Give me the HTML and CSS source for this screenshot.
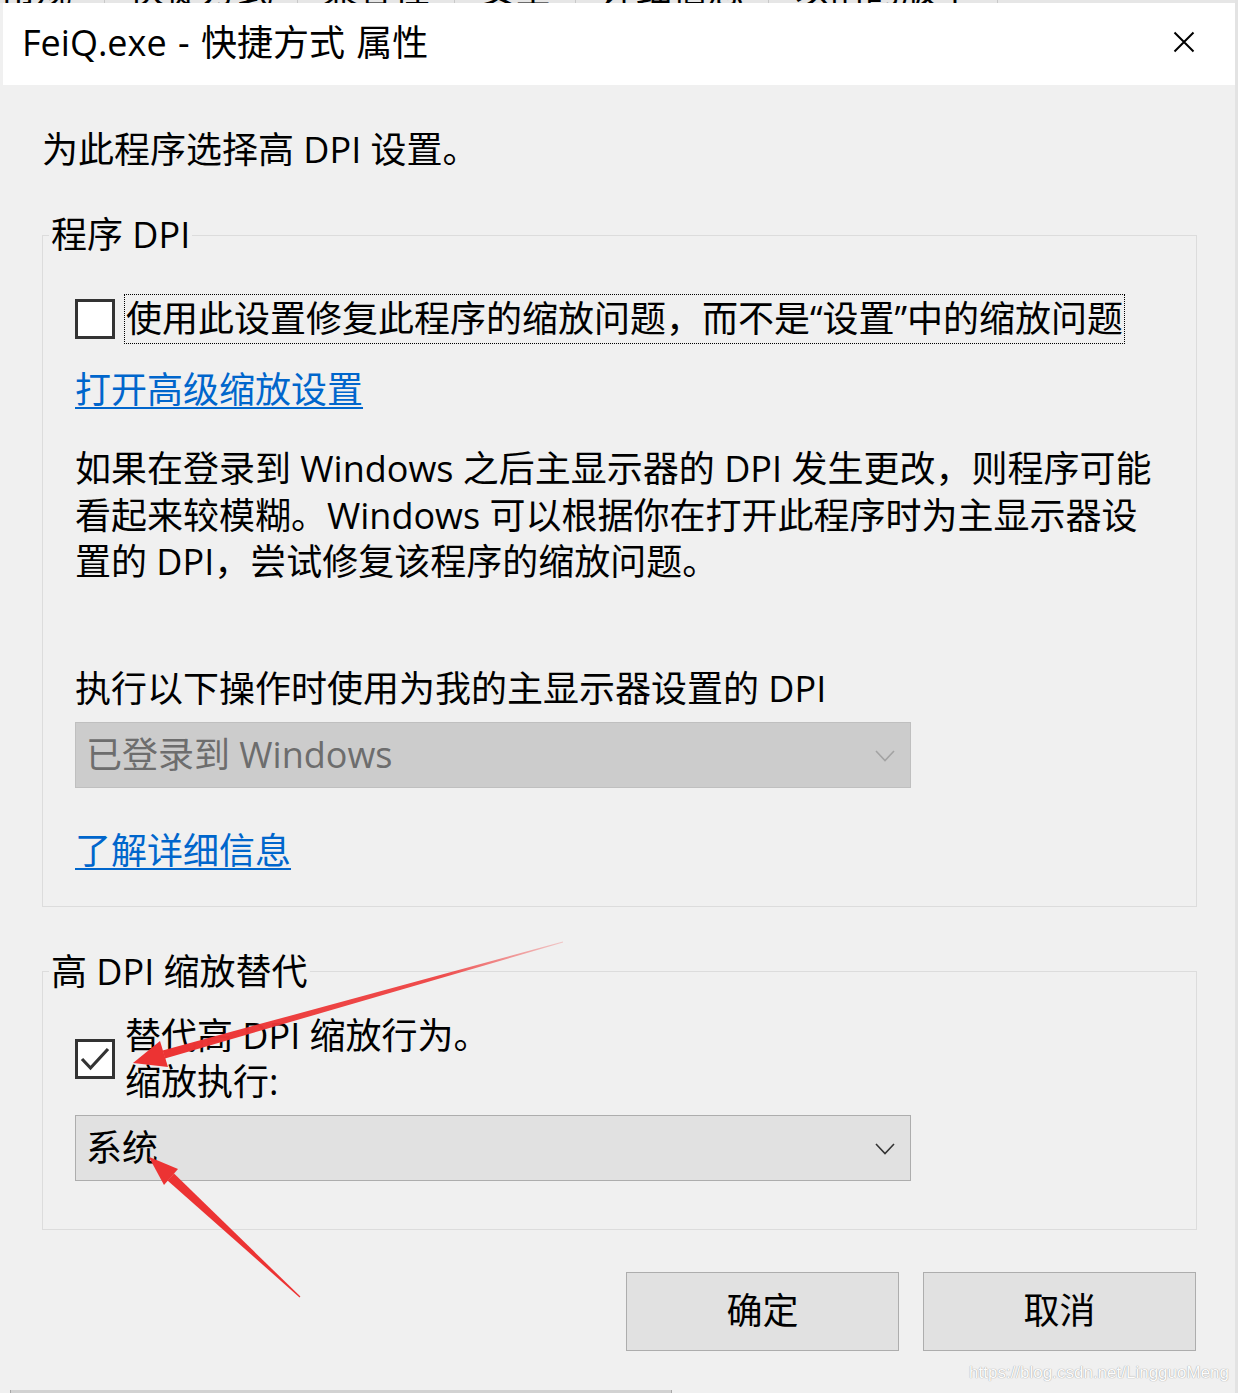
FILE: index.html
```html
<!DOCTYPE html>
<html lang="zh-CN">
<head>
<meta charset="utf-8">
<title>FeiQ.exe - 快捷方式 属性</title>
<link rel="stylesheet" href="styles.css">
</head>
<body>
<div class="screen">
  <div class="bgtabs">
    <span class="bgtab t1">常规</span>
    <span class="bgtab t2">快捷方式</span>
    <span class="bgtab t3">兼容性</span>
    <span class="bgtab t4">安全</span>
    <span class="bgtab t5">详细信息</span>
    <span class="bgtab t6">以前的版本</span>
  </div>
  <div class="titlebar">
    <span class="title">FeiQ.exe - 快捷方式 属性</span>
    <svg class="close" width="22" height="22" viewBox="0 0 22 22"><path d="M1.5 1.5 L20.5 20.5 M20.5 1.5 L1.5 20.5" stroke="#000" stroke-width="2" fill="none"/></svg>
  </div>
  <div class="content">
    <p class="intro">为此程序选择高 DPI 设置。</p>

    <fieldset class="group g1">
      <legend>程序 DPI</legend>
      <div class="check-row r1">
        <span class="checkbox"></span>
        <span class="check-label focused">使用此设置修复此程序的缩放问题，而不是“设置”中的缩放问题</span>
      </div>
      <a class="link l1" href="#">打开高级缩放设置</a>
      <p class="desc">如果在登录到 Windows 之后主显示器的 DPI 发生更改，则程序可能<br>看起来较模糊。Windows 可以根据你在打开此程序时为主显示器设<br>置的 DPI，尝试修复该程序的缩放问题。</p>
      <div class="field-label">执行以下操作时使用为我的主显示器设置的 DPI</div>
      <div class="select disabled">
        <span class="select-text">已登录到 Windows</span>
        <svg class="chevron" width="20" height="12" viewBox="0 0 20 12"><polyline points="1,1 10,10.5 19,1" fill="none" stroke="#a3a3a3" stroke-width="1.6"/></svg>
      </div>
      <a class="link l2" href="#">了解详细信息</a>
    </fieldset>

    <fieldset class="group g2">
      <legend>高 DPI 缩放替代</legend>
      <div class="check-row r2">
        <span class="checkbox checked">
          <svg width="34" height="34" viewBox="0 0 34 34"><polyline points="4,17 12.5,26 30,7" fill="none" stroke="#333" stroke-width="3.2"/></svg>
        </span>
        <span class="check-label two">替代高 DPI 缩放行为。<br>缩放执行:</span>
      </div>
      <div class="select enabled">
        <span class="select-text">系统</span>
        <svg class="chevron" width="20" height="12" viewBox="0 0 20 12"><polyline points="1,1 10,10.5 19,1" fill="none" stroke="#333" stroke-width="1.6"/></svg>
      </div>
    </fieldset>

    <div class="buttons">
      <button class="btn">确定</button>
      <button class="btn">取消</button>
    </div>
  </div>
  <div class="bottom-strip"></div>

  <svg class="annot" width="1238" height="1393" viewBox="0 0 1238 1393">
    <defs>
      <linearGradient id="fade1" x1="563" y1="942" x2="163" y2="1054" gradientUnits="userSpaceOnUse">
        <stop offset="0" stop-color="#f04a4a" stop-opacity="0.25"/>
        <stop offset="0.3" stop-color="#ee3b3b" stop-opacity="0.9"/>
        <stop offset="1" stop-color="#ec3333"/>
      </linearGradient>
    </defs>
    <polygon points="563.1,942.5 562.9,941.5 162.6,1050.5 165.0,1058.5" fill="url(#fade1)"/>
    <polygon points="133,1063 168,1067 160,1041" fill="#ec3333"/>
    <polygon points="300.4,1296.6 299.6,1297.4 167.5,1180.5 174,1173.5" fill="#ec3333"/>
    <polygon points="148.7,1156.7 178,1169 164,1185" fill="#ec3333"/>
  </svg>
  <div class="watermark">https://blog.csdn.net/LingguoMeng</div>
</div>
</body>
</html>
```

FILE: styles.css
```css
html, body {
  margin: 0;
  padding: 0;
}

body {
  background: #f0f0f0;
  font-family: "Open Sans", "Noto Sans CJK SC", sans-serif;
  font-size: 36px;
  color: #000;
}

.screen {
  position: relative;
  width: 1238px;
  height: 1393px;
  box-sizing: border-box;
  border-right: 3px solid #e3e3e3;
  background: #f0f0f0;
  overflow: hidden;
}

/* remnants of the window behind */
.bgtabs {
  height: 3px;
  overflow: hidden;
  display: flex;
  background: #e6e6e6;
  font-family: "Noto Sans CJK SC", sans-serif;
  font-size: 36px;
  line-height: 36px;
}

.bgtab {
  display: block;
  margin-top: -31px;
  height: 40px;
  padding: 0 24px;
  border-right: 1px solid #c8c8c8;
  white-space: nowrap;
}

.bgtab.t1 { padding-left: 0; width: 80px; }

.titlebar {
  margin-left: 3px;
  height: 82px;
  background: #fff;
  display: flex;
  align-items: center;
  justify-content: space-between;
  padding: 0 40px 0 19px;
}

.title {
  font-size: 36px;
  line-height: 46px;
  word-spacing: 2px;
  white-space: nowrap;
  margin-top: -2px;
}

.close {
  display: block;
  margin-top: -4px;
}

.content {
  padding: 42px 38px 0 42px;
}

.intro {
  margin: 0;
  line-height: 46px;
  white-space: nowrap;
}

.group {
  margin: 0;
  border: 1px solid #dcdcdc;
  padding: 0 0 0 32px;
  min-width: 0;
}

.group legend {
  margin-left: -26px;
  padding: 0 2px;
  line-height: 44px;
  white-space: nowrap;
}

.g1 {
  margin-top: 40px;
  padding-top: 37px;
  padding-bottom: 32px;
}

.g2 {
  margin-top: 43px;
  padding-top: 19px;
  padding-bottom: 48px;
}

.check-row {
  display: flex;
  align-items: center;
}

.checkbox {
  width: 40px;
  height: 40px;
  box-sizing: border-box;
  border: 3px solid #333;
  background: #fff;
  flex: none;
  display: flex;
  align-items: center;
  justify-content: center;
}

.checkbox svg {
  display: block;
}

.check-label {
  line-height: 46px;
  white-space: nowrap;
}

.r1 .check-label {
  margin-left: 9px;
}

.focused {
  border: 1px dotted #000;
  padding: 1px 1px;
}

.r2 .check-label {
  margin-left: 10px;
}

.link {
  display: block;
  width: max-content;
  color: #0066cc;
  text-decoration: underline;
  text-decoration-thickness: 2px;
  text-underline-offset: 4px;
  line-height: 46px;
  white-space: nowrap;
}

.l1 { margin-top: 23px; }
.l2 { margin-top: 40px; }

.desc {
  margin: 33px 0 0;
  line-height: 46.5px;
  white-space: nowrap;
}

.field-label {
  margin-top: 80px;
  line-height: 46px;
  white-space: nowrap;
}

.select {
  margin-top: 10px;
  width: 836px;
  height: 66px;
  box-sizing: border-box;
  display: flex;
  align-items: center;
  justify-content: space-between;
  padding: 0 15px 0 10px;
}

.select.disabled {
  background: #cccccc;
  border: 1px solid #bfbfbf;
  color: #6d6d6d;
}

.select.enabled {
  background: #e1e1e1;
  border: 1px solid #adadad;
  color: #000;
}

.select-text {
  line-height: 46px;
  white-space: nowrap;
}

.chevron {
  display: block;
  margin-top: 2px;
}

.buttons {
  display: flex;
  justify-content: flex-end;
  gap: 24px;
  margin-top: 42px;
  padding-right: 1px;
}

.btn {
  width: 273px;
  height: 79px;
  background: #e1e1e1;
  border: 1px solid #adadad;
  font-family: "Open Sans", "Noto Sans CJK SC", sans-serif;
  font-size: 36px;
  color: #000;
  padding: 0;
  line-height: 46px;
}

.bottom-strip {
  position: absolute;
  left: 10px;
  bottom: 0;
  width: 660px;
  height: 3px;
  background: #d2d2d2;
  border-left: 1px solid #a8a8a8;
  border-right: 1px solid #a8a8a8;
}

.annot {
  position: absolute;
  left: 0;
  top: 0;
  pointer-events: none;
}

.watermark {
  position: absolute;
  right: 6px;
  top: 1363px;
  font-family: "Liberation Sans", Arial, sans-serif;
  font-size: 17px;
  color: #fcfcfc;
  text-shadow: 0 0 1px #9a9a9a, 0 0 1px #c0c0c0;
  white-space: nowrap;
}
```
